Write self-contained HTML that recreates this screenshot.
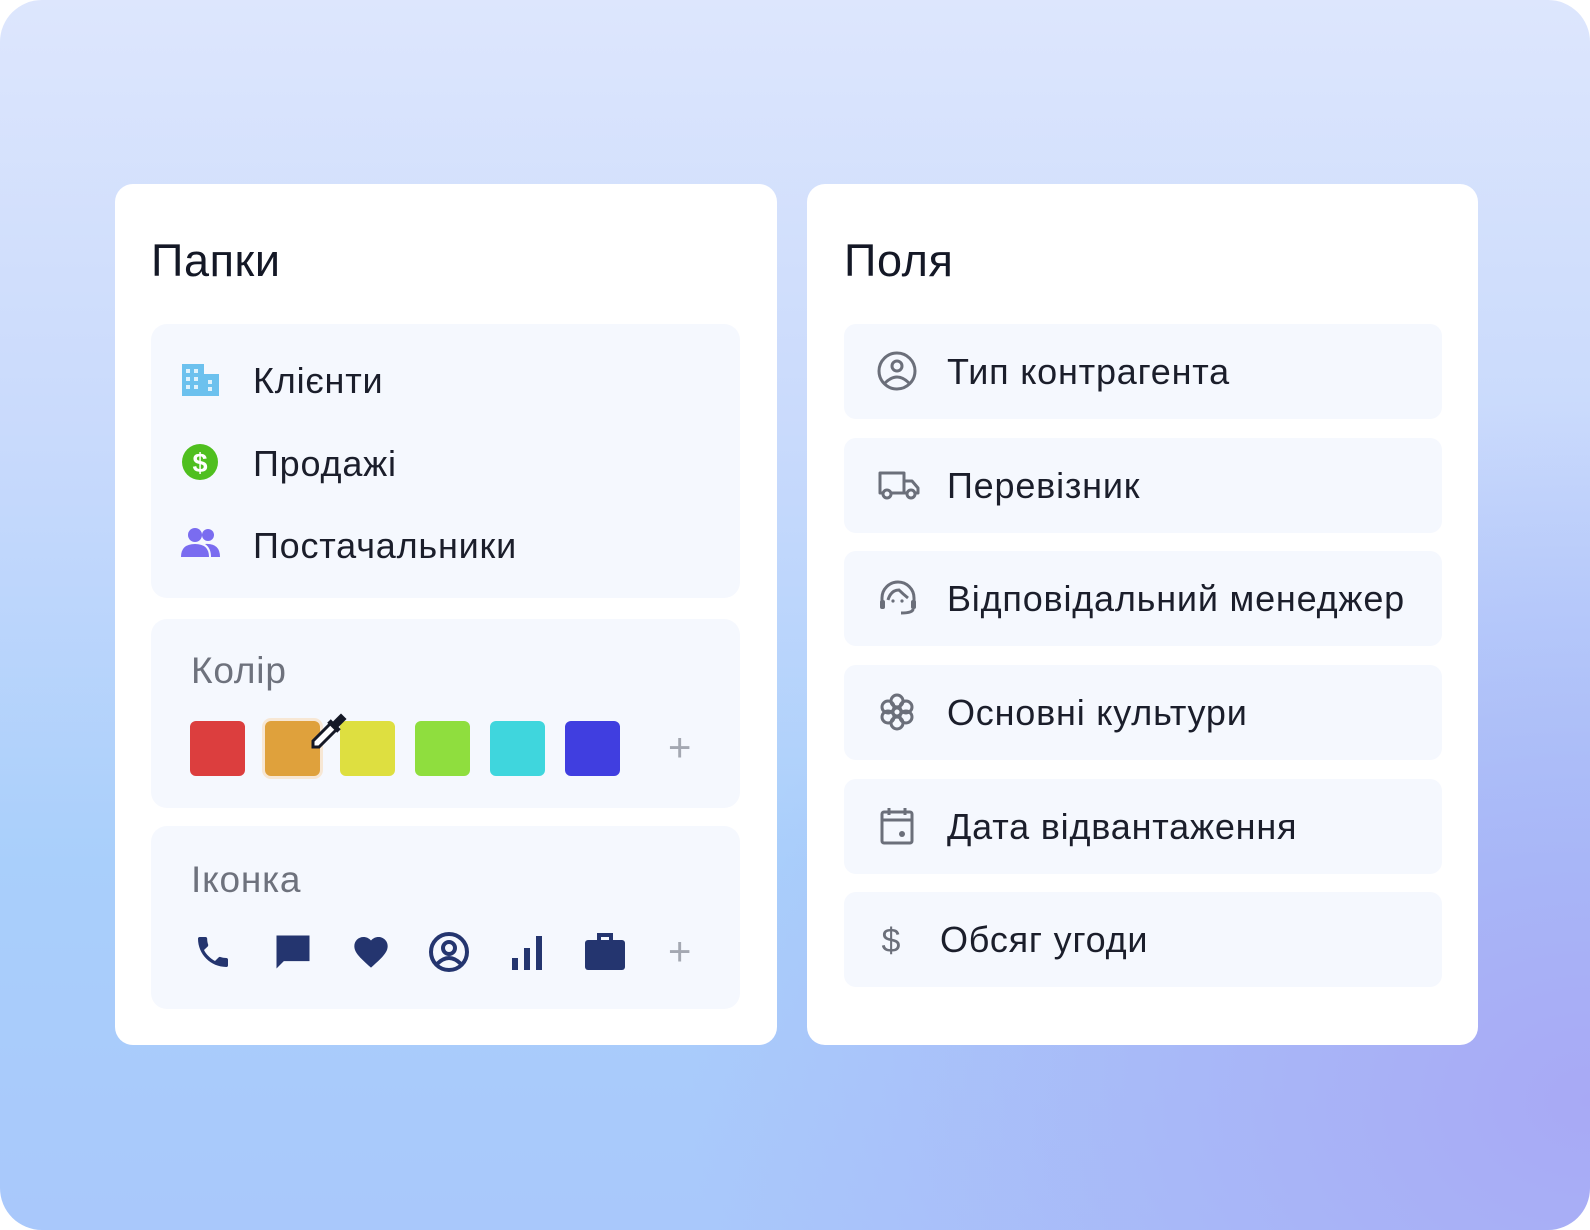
<!DOCTYPE html>
<html><head><meta charset="utf-8"><style>
*{margin:0;padding:0;box-sizing:border-box}
html,body{width:1590px;height:1230px;overflow:hidden;background:#fff}
body{font-family:"Liberation Sans","DejaVu Sans",sans-serif;color:#1b1e2b}
.bg{position:absolute;left:0;top:0;width:1590px;height:1230px;border-radius:42px;
background:radial-gradient(ellipse 900px 700px at 1590px 1100px,#a8a9f5 0%,rgba(168,169,245,0) 100%),linear-gradient(180deg,#dde6fd 0%,#c9dafc 35%,#a9cffb 70%,#a9c8fb 100%);}
.card{position:absolute;top:184px;height:861px;background:#fff;border-radius:18px}
.title{position:absolute;font-size:45px;top:51px;color:#141826;letter-spacing:0.6px}
.blk{position:absolute;background:#f5f8fe;border-radius:16px}
.it{position:absolute;font-size:36px;white-space:nowrap;letter-spacing:0.8px}
.sw{position:absolute;top:102px;width:55px;height:55px;border-radius:6px}
.lbl{position:absolute;left:40px;font-size:37px;color:#6e727d;letter-spacing:0.8px}
.plus{position:absolute;font-size:40px;color:#a4a8b2;font-weight:300}
.row{position:absolute;left:37px;width:598px;height:95px;background:#f5f8fe;border-radius:12px}
.row .t{position:absolute;left:103px;top:27px;font-size:36px;white-space:nowrap;letter-spacing:0.8px}
.row svg{position:absolute;left:33px;top:27px}
</style></head><body>
<div class="bg"></div>
<div class="card" style="left:115px;width:662px">
  <div class="title" style="left:36px">Папки</div>
  <div class="blk" style="left:36px;top:140px;width:589px;height:274px">
    <svg style="position:absolute;left:31px;top:40px" width="37" height="32" viewBox="0 0 37 32"><rect x="0" y="0" width="22" height="32" fill="#6cc1ee"/><rect x="22" y="10" width="15" height="22" fill="#6cc1ee"/><g fill="#dff2fc"><rect x="4" y="5" width="4" height="4"/><rect x="12" y="5" width="4" height="4"/><rect x="4" y="13" width="4" height="4"/><rect x="12" y="13" width="4" height="4"/><rect x="4" y="21" width="4" height="4"/><rect x="12" y="21" width="4" height="4"/><rect x="26" y="16" width="4" height="4"/><rect x="26" y="23" width="4" height="4"/></g></svg>
    <div class="it" style="left:102px;top:36px">Клієнти</div>
    <svg style="position:absolute;left:31px;top:120px" width="36" height="36" viewBox="0 0 36 36"><circle cx="18" cy="18" r="18" fill="#4fbf1f"/><text x="18" y="28" text-anchor="middle" font-size="27" font-weight="bold" fill="#fff" font-family="Liberation Sans">$</text></svg>
    <div class="it" style="left:102px;top:119px">Продажі</div>
    <svg style="position:absolute;left:30px;top:203px" width="40" height="30" viewBox="0 0 40 30"><circle cx="14" cy="8" r="7" fill="#7a6cf0"/><circle cx="27" cy="8" r="6" fill="#7a6cf0"/><path d="M0 30 Q0 17 14 17 Q28 17 28 30Z" fill="#7a6cf0"/><path d="M24 17 Q39 16 39 30 H30 Q30 21 24 17Z" fill="#7a6cf0"/></svg>
    <div class="it" style="left:102px;top:201px">Постачальники</div>
  </div>
  <div class="blk" style="left:36px;top:435px;width:589px;height:189px">
    <div class="lbl" style="top:31px">Колір</div>
    <div class="sw" style="left:39px;background:#dc3e3e"></div>
    <div class="sw" style="left:114px;background:#dfa13c;box-shadow:0 0 0 3px #f7e7d4"></div>
    <div class="sw" style="left:189px;background:#dedf40"></div>
    <div class="sw" style="left:264px;background:#8fde3e"></div>
    <div class="sw" style="left:339px;background:#3fd6dd"></div>
    <div class="sw" style="left:414px;background:#403ee0"></div>
    <svg style="position:absolute;left:158px;top:94px" width="38" height="38" viewBox="0 0 38 38"><path d="M4 34 L4 28 L22 10 L28 16 L10 34Z" fill="#fff" stroke="#141826" stroke-width="3"/><path d="M20 8 L30 18 M24 12 L32 4 L34 6 L26 14" stroke="#141826" stroke-width="5"/></svg>
    <div class="plus" style="left:517px;top:107px">+</div>
  </div>
  <div class="blk" style="left:36px;top:642px;width:589px;height:183px">
    <div class="lbl" style="top:33px">Іконка</div>
    <svg style="position:absolute;left:42px;top:106px" width="40" height="40" viewBox="0 0 24 24"><path fill="#24356f" d="M6.6 10.8c1.4 2.8 3.8 5.1 6.6 6.6l2.2-2.2c.3-.3.7-.4 1-.2 1.1.4 2.3.6 3.6.6.6 0 1 .4 1 1V20c0 .6-.4 1-1 1C10.6 21 3 13.4 3 4c0-.6.4-1 1-1h3.5c.6 0 1 .4 1 1 0 1.3.2 2.5.6 3.6.1.3 0 .7-.2 1z"/></svg>
    <svg style="position:absolute;left:120px;top:104px" width="44" height="44" viewBox="0 0 24 24"><path fill="#24356f" d="M3 3h18v14H7l-4 4z"/></svg>
    <svg style="position:absolute;left:199px;top:106px" width="42" height="40" viewBox="0 0 24 24"><path fill="#24356f" d="M12 21.4l-1.5-1.3C5.4 15.4 2 12.3 2 8.5 2 5.4 4.4 3 7.5 3c1.7 0 3.4.8 4.5 2.1C13.1 3.8 14.8 3 16.5 3 19.6 3 22 5.4 22 8.5c0 3.8-3.4 6.9-8.5 11.5z"/></svg>
    <svg style="position:absolute;left:276px;top:104px" width="44" height="44" viewBox="0 0 44 44"><circle cx="22" cy="22" r="18" fill="none" stroke="#24356f" stroke-width="4"/><circle cx="22" cy="18" r="6" fill="none" stroke="#24356f" stroke-width="4"/><path d="M10 34 Q22 22 34 34" fill="none" stroke="#24356f" stroke-width="4"/></svg>
    <svg style="position:absolute;left:359px;top:108px" width="34" height="36" viewBox="0 0 34 36"><rect x="2" y="24" width="6" height="12" fill="#24356f"/><rect x="14" y="14" width="6" height="22" fill="#24356f"/><rect x="26" y="2" width="6" height="34" fill="#24356f"/></svg>
    <svg style="position:absolute;left:433px;top:104px" width="42" height="42" viewBox="0 0 42 42"><path d="M15 10V5h12v5" fill="none" stroke="#24356f" stroke-width="4"/><rect x="1" y="10" width="40" height="30" rx="3" fill="#24356f"/></svg>
    <div class="plus" style="left:517px;top:104px">+</div>
  </div>
</div>
<div class="card" style="left:807px;width:671px">
  <div class="title" style="left:37px">Поля</div>
  <div class="row" style="top:140px"><svg width="40" height="40" viewBox="0 0 40 40"><circle cx="20" cy="20" r="18" fill="none" stroke="#6b6f7a" stroke-width="3"/><circle cx="20" cy="15" r="5" fill="none" stroke="#6b6f7a" stroke-width="3"/><path d="M8 32 Q20 20 32 32" fill="none" stroke="#6b6f7a" stroke-width="3"/></svg><div class="t">Тип контрагента</div></div>
  <div class="row" style="top:254px"><svg width="44" height="40" viewBox="0 0 44 40"><path d="M3 8h24v20H3z M27 16h8l6 7v5h-14" fill="none" stroke="#6b6f7a" stroke-width="3" stroke-linejoin="round"/><circle cx="10" cy="29" r="4" fill="#f5f8fe" stroke="#6b6f7a" stroke-width="3"/><circle cx="34" cy="29" r="4" fill="#f5f8fe" stroke="#6b6f7a" stroke-width="3"/></svg><div class="t">Перевізник</div></div>
  <div class="row" style="top:367px"><svg width="42" height="40" viewBox="0 0 42 40"><path d="M5 26 V20 A16 16 0 0 1 37 20 V26" fill="none" stroke="#6b6f7a" stroke-width="3"/><path d="M11 22 Q14 12 22 12 Q26 16 31 20" fill="none" stroke="#6b6f7a" stroke-width="3"/><rect x="3" y="22" width="5" height="9" rx="2" fill="#6b6f7a"/><rect x="34" y="22" width="5" height="9" rx="2" fill="#6b6f7a"/><path d="M36 31 Q36 35 24 35" fill="none" stroke="#6b6f7a" stroke-width="3"/><circle cx="16" cy="23" r="1.6" fill="#6b6f7a"/><circle cx="25" cy="23" r="1.6" fill="#6b6f7a"/></svg><div class="t">Відповідальний менеджер</div></div>
  <div class="row" style="top:481px"><svg width="40" height="40" viewBox="0 0 40 40"><g fill="none" stroke="#6b6f7a" stroke-width="3"><circle cx="20" cy="9" r="6"/><circle cx="20" cy="31" r="6"/><circle cx="11" cy="15" r="6"/><circle cx="29" cy="15" r="6"/><circle cx="11" cy="25" r="6"/><circle cx="29" cy="25" r="6"/><circle cx="20" cy="20" r="4"/></g></svg><div class="t">Основні культури</div></div>
  <div class="row" style="top:595px"><svg width="40" height="40" viewBox="0 0 40 40"><rect x="5" y="6" width="30" height="31" rx="2" fill="none" stroke="#6b6f7a" stroke-width="3"/><path d="M5 14h30 M12 2v7 M28 2v7" stroke="#6b6f7a" stroke-width="3"/><circle cx="25" cy="28" r="3" fill="#6b6f7a"/></svg><div class="t">Дата відвантаження</div></div>
  <div class="row" style="top:708px"><svg width="40" height="40" viewBox="0 0 40 40"><text x="14" y="33" text-anchor="middle" font-size="34" fill="#6b6f7a" font-family="Liberation Sans">$</text></svg><div class="t" style="left:96px">Обсяг угоди</div></div>
</div>
</body></html>
